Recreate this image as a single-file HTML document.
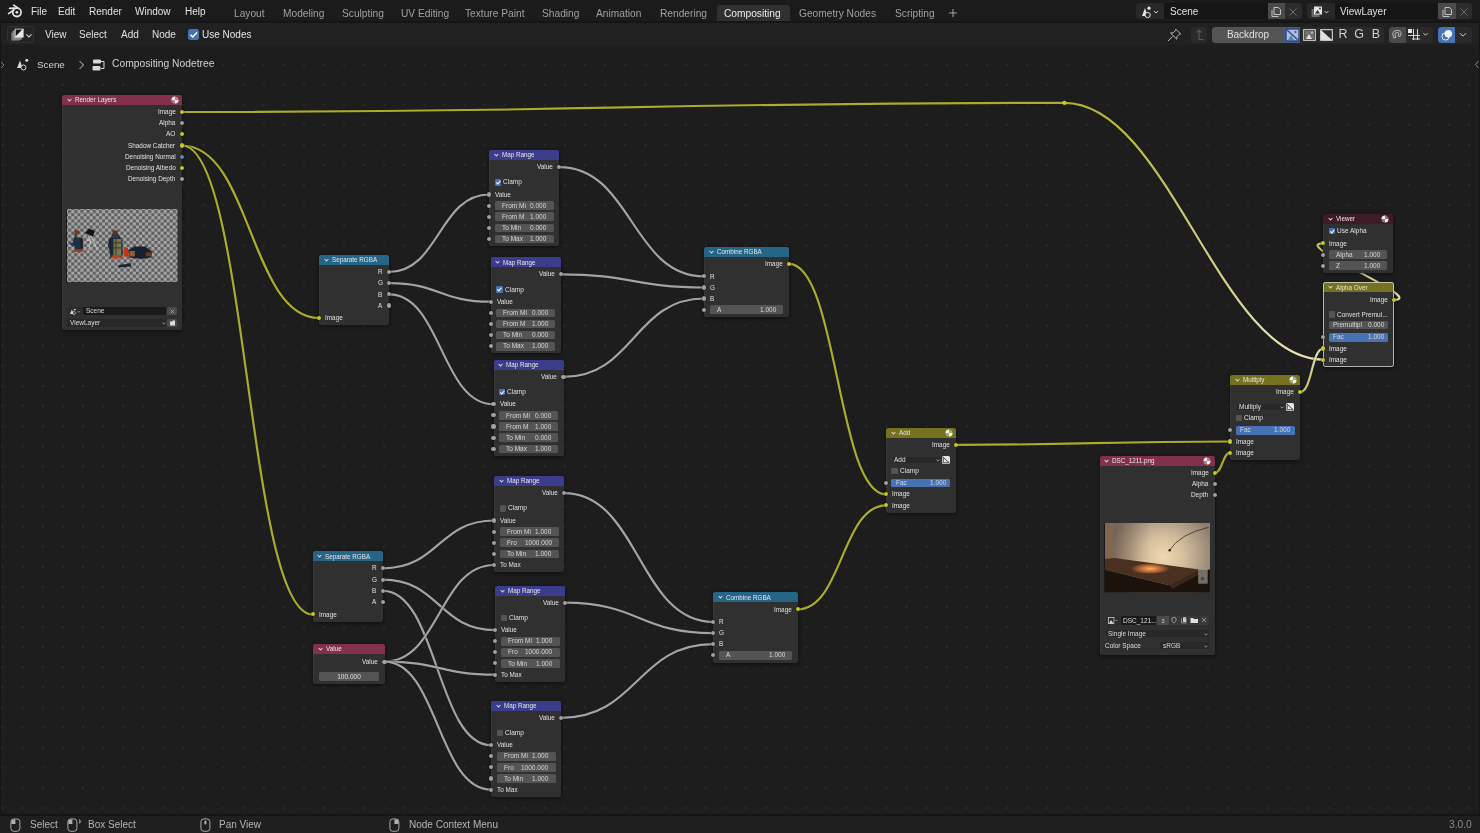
<!DOCTYPE html><html><head><meta charset="utf-8"><style>
*{margin:0;padding:0;box-sizing:border-box}
html,body{width:1480px;height:833px;overflow:hidden;background:#1d1d1d;font-family:"Liberation Sans", sans-serif}
.t{position:absolute;white-space:nowrap;line-height:1.2;will-change:transform}
.r{position:absolute}
.n{position:absolute;background:#303030;border-radius:2.5px;box-shadow:0 1px 4px rgba(0,0,0,0.55), inset 0.8px 0 0 rgba(255,255,255,0.05)}
.nh{position:absolute;border-radius:2.5px 2.5px 0 0}
.s{position:absolute;border-radius:50%;box-shadow:0 0 0 0.4px rgba(0,0,0,0.5)}
.ic{position:absolute;overflow:visible}
.links,.grid{position:absolute;left:0;top:0}
</style></head><body>
<svg class="grid" width="1480" height="833"><defs><pattern id="dots" x="2.63" y="4.35" width="20.087" height="20.087" patternUnits="userSpaceOnUse"><circle cx="0" cy="0" r="1.2" fill="#2a2a2a"/><circle cx="20.087" cy="0" r="1.2" fill="#2a2a2a"/><circle cx="0" cy="20.087" r="1.2" fill="#2a2a2a"/><circle cx="20.087" cy="20.087" r="1.2" fill="#2a2a2a"/></pattern></defs><rect x="0" y="46" width="1480" height="768" fill="url(#dots)"/></svg>
<svg class="links" width="1480" height="833" viewBox="0 0 1480 833">
<defs>
<linearGradient id="g0" gradientUnits="userSpaceOnUse" x1="1064.4" y1="102.9" x2="1323.3" y2="359.6"><stop offset="0" stop-color="#b0b02e"/><stop offset="1" stop-color="#e8e4bc"/></linearGradient>
<linearGradient id="g1" gradientUnits="userSpaceOnUse" x1="1300.3" y1="392.0" x2="1323.3" y2="348.5"><stop offset="0" stop-color="#c0bc60"/><stop offset="1" stop-color="#e8e4bc"/></linearGradient>
<linearGradient id="g2" gradientUnits="userSpaceOnUse" x1="1393.7" y1="299.8" x2="1323.3" y2="243.4"><stop offset="0" stop-color="#e0dcb0"/><stop offset="1" stop-color="#c8c460"/></linearGradient>
</defs>
<path d="M182.00 112.00 C623.20 112.00 623.20 102.90 1064.40 102.90" stroke="#151515" stroke-opacity="0.45" stroke-width="3.6" fill="none"/>
<path d="M182.00 112.00 C623.20 112.00 623.20 102.90 1064.40 102.90" stroke="#abab2e" stroke-width="2.2" fill="none"/>
<path d="M1064.40 102.90 C1167.96 102.90 1219.74 359.60 1323.30 359.60" stroke="#151515" stroke-opacity="0.45" stroke-width="3.6" fill="none"/>
<path d="M1064.40 102.90 C1167.96 102.90 1219.74 359.60 1323.30 359.60" stroke="url(#g0)" stroke-width="2.2" fill="none"/>
<path d="M182.00 145.50 C250.50 145.50 250.50 318.00 319.00 318.00" stroke="#151515" stroke-opacity="0.45" stroke-width="3.6" fill="none"/>
<path d="M182.00 145.50 C250.50 145.50 250.50 318.00 319.00 318.00" stroke="#abab2e" stroke-width="2.2" fill="none"/>
<path d="M182.00 145.50 C247.30 145.50 247.30 614.40 312.60 614.40" stroke="#151515" stroke-opacity="0.45" stroke-width="3.6" fill="none"/>
<path d="M182.00 145.50 C247.30 145.50 247.30 614.40 312.60 614.40" stroke="#abab2e" stroke-width="2.2" fill="none"/>
<path d="M389.00 272.00 C439.10 272.00 439.10 194.50 489.20 194.50" stroke="#151515" stroke-opacity="0.45" stroke-width="3.6" fill="none"/>
<path d="M389.00 272.00 C439.10 272.00 439.10 194.50 489.20 194.50" stroke="#a3a3a3" stroke-width="2.2" fill="none"/>
<path d="M389.00 283.20 C439.90 283.20 439.90 301.70 490.80 301.70" stroke="#151515" stroke-opacity="0.45" stroke-width="3.6" fill="none"/>
<path d="M389.00 283.20 C439.90 283.20 439.90 301.70 490.80 301.70" stroke="#a3a3a3" stroke-width="2.2" fill="none"/>
<path d="M389.00 294.40 C441.25 294.40 441.25 404.30 493.50 404.30" stroke="#151515" stroke-opacity="0.45" stroke-width="3.6" fill="none"/>
<path d="M389.00 294.40 C441.25 294.40 441.25 404.30 493.50 404.30" stroke="#a3a3a3" stroke-width="2.2" fill="none"/>
<path d="M559.20 167.10 C631.80 167.10 631.80 276.40 704.40 276.40" stroke="#151515" stroke-opacity="0.45" stroke-width="3.6" fill="none"/>
<path d="M559.20 167.10 C631.80 167.10 631.80 276.40 704.40 276.40" stroke="#a3a3a3" stroke-width="2.2" fill="none"/>
<path d="M560.80 274.30 C632.60 274.30 632.60 287.50 704.40 287.50" stroke="#151515" stroke-opacity="0.45" stroke-width="3.6" fill="none"/>
<path d="M560.80 274.30 C632.60 274.30 632.60 287.50 704.40 287.50" stroke="#a3a3a3" stroke-width="2.2" fill="none"/>
<path d="M563.50 376.90 C633.95 376.90 633.95 298.50 704.40 298.50" stroke="#151515" stroke-opacity="0.45" stroke-width="3.6" fill="none"/>
<path d="M563.50 376.90 C633.95 376.90 633.95 298.50 704.40 298.50" stroke="#a3a3a3" stroke-width="2.2" fill="none"/>
<path d="M788.90 263.80 C837.45 263.80 837.45 494.30 886.00 494.30" stroke="#151515" stroke-opacity="0.45" stroke-width="3.6" fill="none"/>
<path d="M788.90 263.80 C837.45 263.80 837.45 494.30 886.00 494.30" stroke="#abab2e" stroke-width="2.2" fill="none"/>
<path d="M797.70 609.40 C841.85 609.40 841.85 505.40 886.00 505.40" stroke="#151515" stroke-opacity="0.45" stroke-width="3.6" fill="none"/>
<path d="M797.70 609.40 C841.85 609.40 841.85 505.40 886.00 505.40" stroke="#abab2e" stroke-width="2.2" fill="none"/>
<path d="M956.00 444.80 C1093.15 444.80 1093.15 441.50 1230.30 441.50" stroke="#151515" stroke-opacity="0.45" stroke-width="3.6" fill="none"/>
<path d="M956.00 444.80 C1093.15 444.80 1093.15 441.50 1230.30 441.50" stroke="#abab2e" stroke-width="2.2" fill="none"/>
<path d="M1214.80 472.80 C1222.55 472.80 1222.55 452.60 1230.30 452.60" stroke="#151515" stroke-opacity="0.45" stroke-width="3.6" fill="none"/>
<path d="M1214.80 472.80 C1222.55 472.80 1222.55 452.60 1230.30 452.60" stroke="#abab2e" stroke-width="2.2" fill="none"/>
<path d="M1300.30 392.00 C1311.80 392.00 1311.80 348.50 1323.30 348.50" stroke="#151515" stroke-opacity="0.45" stroke-width="3.6" fill="none"/>
<path d="M1300.30 392.00 C1311.80 392.00 1311.80 348.50 1323.30 348.50" stroke="url(#g1)" stroke-width="2.2" fill="none"/>
<path d="M1393.70 299.80 C1428.90 299.80 1288.10 243.40 1323.30 243.40" stroke="#151515" stroke-opacity="0.45" stroke-width="3.6" fill="none"/>
<path d="M1393.70 299.80 C1428.90 299.80 1288.10 243.40 1323.30 243.40" stroke="url(#g2)" stroke-width="2.2" fill="none"/>
<path d="M383.00 568.30 C438.65 568.30 438.65 520.50 494.30 520.50" stroke="#151515" stroke-opacity="0.45" stroke-width="3.6" fill="none"/>
<path d="M383.00 568.30 C438.65 568.30 438.65 520.50 494.30 520.50" stroke="#a3a3a3" stroke-width="2.2" fill="none"/>
<path d="M383.00 579.60 C439.10 579.60 439.10 630.10 495.20 630.10" stroke="#151515" stroke-opacity="0.45" stroke-width="3.6" fill="none"/>
<path d="M383.00 579.60 C439.10 579.60 439.10 630.10 495.20 630.10" stroke="#a3a3a3" stroke-width="2.2" fill="none"/>
<path d="M383.00 590.80 C437.10 590.80 437.10 745.20 491.20 745.20" stroke="#151515" stroke-opacity="0.45" stroke-width="3.6" fill="none"/>
<path d="M383.00 590.80 C437.10 590.80 437.10 745.20 491.20 745.20" stroke="#a3a3a3" stroke-width="2.2" fill="none"/>
<path d="M384.50 661.60 C439.40 661.60 439.40 565.00 494.30 565.00" stroke="#151515" stroke-opacity="0.45" stroke-width="3.6" fill="none"/>
<path d="M384.50 661.60 C439.40 661.60 439.40 565.00 494.30 565.00" stroke="#a3a3a3" stroke-width="2.2" fill="none"/>
<path d="M384.50 661.60 C439.85 661.60 439.85 674.60 495.20 674.60" stroke="#151515" stroke-opacity="0.45" stroke-width="3.6" fill="none"/>
<path d="M384.50 661.60 C439.85 661.60 439.85 674.60 495.20 674.60" stroke="#a3a3a3" stroke-width="2.2" fill="none"/>
<path d="M384.50 661.60 C437.85 661.60 437.85 789.70 491.20 789.70" stroke="#151515" stroke-opacity="0.45" stroke-width="3.6" fill="none"/>
<path d="M384.50 661.60 C437.85 661.60 437.85 789.70 491.20 789.70" stroke="#a3a3a3" stroke-width="2.2" fill="none"/>
<path d="M564.30 493.10 C638.75 493.10 638.75 622.00 713.20 622.00" stroke="#151515" stroke-opacity="0.45" stroke-width="3.6" fill="none"/>
<path d="M564.30 493.10 C638.75 493.10 638.75 622.00 713.20 622.00" stroke="#a3a3a3" stroke-width="2.2" fill="none"/>
<path d="M565.20 602.70 C639.20 602.70 639.20 633.10 713.20 633.10" stroke="#151515" stroke-opacity="0.45" stroke-width="3.6" fill="none"/>
<path d="M565.20 602.70 C639.20 602.70 639.20 633.10 713.20 633.10" stroke="#a3a3a3" stroke-width="2.2" fill="none"/>
<path d="M561.20 717.80 C637.20 717.80 637.20 644.10 713.20 644.10" stroke="#151515" stroke-opacity="0.45" stroke-width="3.6" fill="none"/>
<path d="M561.20 717.80 C637.20 717.80 637.20 644.10 713.20 644.10" stroke="#a3a3a3" stroke-width="2.2" fill="none"/>
<circle cx="1064.4" cy="102.9" r="2.1" fill="#c8c82a"/>
</svg>
<div class="n" style="left:62.00px;top:95.00px;width:120.00px;height:235.00px;"></div>
<div class="nh" style="left:62.00px;top:95.00px;width:120.00px;height:10px;background:#83314a"></div>
<svg class="ic" style="left:66.50px;top:98.00px" width="5" height="4" viewBox="0 0 5 4"><path d="M0.6 1 L2.5 2.9 L4.4 1" stroke="#d4d4d4" stroke-width="1.05" fill="none"/></svg>
<div class="t" style="left:74.60px;top:96.32px;font-size:6.3px;color:#e6e6e6;">Render Layers</div>
<svg class="ic" style="left:170.50px;top:96.00px" width="8" height="8" viewBox="0 0 8 8"><circle cx="4" cy="4" r="3.5" fill="rgba(255,255,255,0.4)"/><path d="M4 4 L4 0.5 A3.5 3.5 0 0 0 0.5 4 Z" fill="#f0f0f0"/><path d="M4 4 L7.5 4 A3.5 3.5 0 0 1 4 7.5 Z" fill="#f0f0f0"/></svg>
<div class="t" style="right:1304.30px;top:108.16px;font-size:6.4px;color:#e0e0e0;">Image</div>
<div class="t" style="right:1304.30px;top:119.36px;font-size:6.4px;color:#e0e0e0;">Alpha</div>
<div class="t" style="right:1304.30px;top:130.46px;font-size:6.4px;color:#e0e0e0;">AO</div>
<div class="t" style="right:1304.30px;top:141.66px;font-size:6.4px;color:#e0e0e0;">Shadow Catcher</div>
<div class="t" style="right:1304.30px;top:152.76px;font-size:6.4px;color:#e0e0e0;">Denoising Normal</div>
<div class="t" style="right:1304.30px;top:163.96px;font-size:6.4px;color:#e0e0e0;">Denoising Albedo</div>
<div class="t" style="right:1304.30px;top:175.16px;font-size:6.4px;color:#e0e0e0;">Denoising Depth</div>
<div class="r" style="left:66.20px;top:208.70px;width:111.40px;height:74.00px;background:#1e1e1e;border-radius:1.5px;"></div>
<svg class="ic" style="left:66.60px;top:209.10px" width="110.60" height="73.20" viewBox="66.60 209.10 110.60 73.20"><defs><pattern id="chk" x="67.7" y="210.2" width="6.16" height="6.16" patternUnits="userSpaceOnUse"><rect width="6.16" height="6.16" fill="#a6a6a6"/><rect width="3.08" height="3.08" fill="#5f5f5f"/><rect x="3.08" y="3.08" width="3.08" height="3.08" fill="#5f5f5f"/></pattern></defs><rect x="66.60" y="209.10" width="110.60" height="73.20" fill="url(#chk)"/><g><path d="M72 243 L74 237 L78 236.5 L82 238 L82.5 249 L80 251 L75 251 L74 246 L69.5 244.5 L70 242.5 Z" fill="#1c3048"/><rect x="74" y="230.5" width="5" height="3" fill="#7a3020"/><rect x="74" y="233.5" width="4.5" height="3" fill="#3a4050"/><rect x="77" y="234.5" width="3" height="3" fill="#a8a060"/><rect x="73.5" y="249.5" width="9" height="2.5" fill="#a83a1e"/><rect x="80" y="239" width="2.5" height="9" fill="#202020"/><path d="M84.5 233 L88.5 228.5 L94.5 231 L92.5 236.5 Z" fill="#141414"/><path d="M88 236 L90 242 L88.5 250 M91 237 L95 245 L96.5 250 M86 240.5 L91 240" stroke="#d0d0d0" stroke-width="1.1" fill="none" opacity="0.75"/><path d="M107.5 246 L108.5 239 L112 236 L119 236 L122 240 L122.5 255 L119 258 L110 258 L109 250 Z" fill="#1e2636"/><rect x="112" y="230.5" width="5.5" height="4" fill="#6a3020"/><rect x="111.5" y="234" width="7" height="4" fill="#303848"/><rect x="113" y="239" width="8" height="17" fill="#9a9660" opacity="0.7"/><path d="M113 243 H121 M113 248 H121 M115.5 239 V256" stroke="#2a2a20" stroke-width="0.8"/><rect x="111" y="255.5" width="9" height="3" fill="#c0401c"/><path d="M123.5 249 L127.5 247.5 L128.6 256.5 L124 256.8 Z" fill="#d02c14"/><path d="M128 250 L134 246.5 L145 246.5 L151.5 251.5 L151 257.5 L141 259.2 L129 257.5 Z" fill="#182030"/><rect x="129" y="251" width="5.5" height="5.5" fill="#b07030" opacity="0.8"/><rect x="145.5" y="252.5" width="5.5" height="4" fill="#6a3a1c"/><path d="M118 265 L126 264 L130.8 263 L130.3 266.5 L118.5 267.5 Z" fill="#1a2436"/></g></svg>
<div class="r" style="left:67.40px;top:306.80px;width:15.40px;height:8.40px;background:#2c2c2c;border-radius:1.5px;"></div>
<svg class="ic" style="left:68.5px;top:307.5px" width="12" height="7" viewBox="0 0 12 7"><path d="M1 6 L3 1.5 L4.5 6 Z" fill="#ddd"/><circle cx="5" cy="5" r="1.5" fill="none" stroke="#ddd" stroke-width="0.6"/><circle cx="5.8" cy="1.6" r="0.9" fill="#ddd"/><path d="M8.4 3.2 L9.6 4.4 L10.8 3.2" stroke="#ccc" stroke-width="0.6" fill="none"/></svg>
<div class="r" style="left:83.00px;top:306.80px;width:83.00px;height:8.40px;background:#1a1a1a;border-radius:0px;"></div>
<div class="t" style="left:85.50px;top:307.10px;font-size:6.5px;color:#dcdcdc;">Scene</div>
<div class="r" style="left:166.80px;top:306.80px;width:10.40px;height:8.40px;background:#4a4a4a;border-radius:1.5px;"></div>
<svg class="ic" style="left:169.5px;top:308.5px" width="5" height="5" viewBox="0 0 5 5"><path d="M0.7 0.7 L4.3 4.3 M4.3 0.7 L0.7 4.3" stroke="#bbb" stroke-width="0.7"/></svg>
<div class="r" style="left:67.40px;top:318.80px;width:99.00px;height:8.50px;background:#282828;border-radius:1.5px;"></div>
<div class="t" style="left:70.00px;top:319.10px;font-size:6.5px;color:#dcdcdc;">ViewLayer</div>
<svg class="ic" style="left:161.5px;top:322px" width="4" height="3" viewBox="0 0 4 3"><path d="M0.4 0.6 L2 2.2 L3.6 0.6" stroke="#bbb" stroke-width="0.7" fill="none"/></svg>
<div class="r" style="left:166.80px;top:318.80px;width:10.40px;height:8.50px;background:#4a4a4a;border-radius:1.5px;"></div>
<svg class="ic" style="left:168.5px;top:320px" width="7" height="6" viewBox="0 0 7 6"><path d="M1 1.5 L3.5 1.5 L3.5 0.5 L6 0.5 L6 5.5 L1 5.5 Z" fill="#ddd"/></svg>
<div class="n" style="left:319.00px;top:255.00px;width:70.00px;height:70.00px;"></div>
<div class="nh" style="left:319.00px;top:255.00px;width:70.00px;height:10px;background:#246588"></div>
<svg class="ic" style="left:323.50px;top:258.00px" width="5" height="4" viewBox="0 0 5 4"><path d="M0.6 1 L2.5 2.9 L4.4 1" stroke="#d4d4d4" stroke-width="1.05" fill="none"/></svg>
<div class="t" style="left:331.60px;top:256.32px;font-size:6.3px;color:#e6e6e6;">Separate RGBA</div>
<div class="t" style="right:1097.30px;top:268.16px;font-size:6.4px;color:#e0e0e0;">R</div>
<div class="t" style="right:1097.30px;top:279.36px;font-size:6.4px;color:#e0e0e0;">G</div>
<div class="t" style="right:1097.30px;top:290.56px;font-size:6.4px;color:#e0e0e0;">B</div>
<div class="t" style="right:1097.30px;top:301.66px;font-size:6.4px;color:#e0e0e0;">A</div>
<div class="t" style="left:325.00px;top:314.16px;font-size:6.4px;color:#e0e0e0;">Image</div>
<div class="n" style="left:489.20px;top:150.00px;width:70.00px;height:96.00px;"></div>
<div class="nh" style="left:489.20px;top:150.00px;width:70.00px;height:10px;background:#3c3c8c"></div>
<svg class="ic" style="left:493.70px;top:153.00px" width="5" height="4" viewBox="0 0 5 4"><path d="M0.6 1 L2.5 2.9 L4.4 1" stroke="#d4d4d4" stroke-width="1.05" fill="none"/></svg>
<div class="t" style="left:501.80px;top:151.32px;font-size:6.3px;color:#e6e6e6;">Map Range</div>
<div class="t" style="right:927.10px;top:163.26px;font-size:6.4px;color:#e0e0e0;">Value</div>
<div class="r" style="left:494.50px;top:179.00px;width:6.60px;height:6.60px;background:#4772b3;border-radius:1.2px;"></div>
<svg class="ic" style="left:494.50px;top:179.00px" width="6.6" height="6.6" viewBox="0 0 10 10"><path d="M2 5.2 L4.2 7.4 L8.2 2.6" stroke="#fff" stroke-width="1.6" fill="none"/></svg>
<div class="t" style="left:503.10px;top:178.40px;font-size:6.5px;color:#e0e0e0;">Clamp</div>
<div class="t" style="left:495.20px;top:190.66px;font-size:6.4px;color:#e0e0e0;">Value</div>
<div class="r" style="left:494.80px;top:201.30px;width:58.80px;height:8.80px;background:#545454;border-radius:1.5px;"></div>
<div class="t" style="left:501.80px;top:201.70px;font-size:6.5px;color:#d8d8d8;">From Mi</div>
<div class="t" style="right:933.40px;top:201.70px;font-size:6.5px;color:#d8d8d8;">0.000</div>
<div class="r" style="left:494.80px;top:212.40px;width:58.80px;height:8.80px;background:#545454;border-radius:1.5px;"></div>
<div class="t" style="left:501.80px;top:212.80px;font-size:6.5px;color:#d8d8d8;">From M</div>
<div class="t" style="right:933.40px;top:212.80px;font-size:6.5px;color:#d8d8d8;">1.000</div>
<div class="r" style="left:494.80px;top:223.50px;width:58.80px;height:8.80px;background:#545454;border-radius:1.5px;"></div>
<div class="t" style="left:501.80px;top:223.90px;font-size:6.5px;color:#d8d8d8;">To Min</div>
<div class="t" style="right:933.40px;top:223.90px;font-size:6.5px;color:#d8d8d8;">0.000</div>
<div class="r" style="left:494.80px;top:234.70px;width:58.80px;height:8.80px;background:#545454;border-radius:1.5px;"></div>
<div class="t" style="left:501.80px;top:235.10px;font-size:6.5px;color:#d8d8d8;">To Max</div>
<div class="t" style="right:933.40px;top:235.10px;font-size:6.5px;color:#d8d8d8;">1.000</div>
<div class="n" style="left:490.80px;top:257.20px;width:70.00px;height:96.00px;"></div>
<div class="nh" style="left:490.80px;top:257.20px;width:70.00px;height:10px;background:#3c3c8c"></div>
<svg class="ic" style="left:495.30px;top:260.20px" width="5" height="4" viewBox="0 0 5 4"><path d="M0.6 1 L2.5 2.9 L4.4 1" stroke="#d4d4d4" stroke-width="1.05" fill="none"/></svg>
<div class="t" style="left:503.40px;top:258.52px;font-size:6.3px;color:#e6e6e6;">Map Range</div>
<div class="t" style="right:925.50px;top:270.46px;font-size:6.4px;color:#e0e0e0;">Value</div>
<div class="r" style="left:496.10px;top:286.20px;width:6.60px;height:6.60px;background:#4772b3;border-radius:1.2px;"></div>
<svg class="ic" style="left:496.10px;top:286.20px" width="6.6" height="6.6" viewBox="0 0 10 10"><path d="M2 5.2 L4.2 7.4 L8.2 2.6" stroke="#fff" stroke-width="1.6" fill="none"/></svg>
<div class="t" style="left:504.70px;top:285.60px;font-size:6.5px;color:#e0e0e0;">Clamp</div>
<div class="t" style="left:496.80px;top:297.86px;font-size:6.4px;color:#e0e0e0;">Value</div>
<div class="r" style="left:496.40px;top:308.50px;width:58.80px;height:8.80px;background:#545454;border-radius:1.5px;"></div>
<div class="t" style="left:503.40px;top:308.90px;font-size:6.5px;color:#d8d8d8;">From Mi</div>
<div class="t" style="right:931.80px;top:308.90px;font-size:6.5px;color:#d8d8d8;">0.000</div>
<div class="r" style="left:496.40px;top:319.60px;width:58.80px;height:8.80px;background:#545454;border-radius:1.5px;"></div>
<div class="t" style="left:503.40px;top:320.00px;font-size:6.5px;color:#d8d8d8;">From M</div>
<div class="t" style="right:931.80px;top:320.00px;font-size:6.5px;color:#d8d8d8;">1.000</div>
<div class="r" style="left:496.40px;top:330.70px;width:58.80px;height:8.80px;background:#545454;border-radius:1.5px;"></div>
<div class="t" style="left:503.40px;top:331.10px;font-size:6.5px;color:#d8d8d8;">To Min</div>
<div class="t" style="right:931.80px;top:331.10px;font-size:6.5px;color:#d8d8d8;">0.000</div>
<div class="r" style="left:496.40px;top:341.90px;width:58.80px;height:8.80px;background:#545454;border-radius:1.5px;"></div>
<div class="t" style="left:503.40px;top:342.30px;font-size:6.5px;color:#d8d8d8;">To Max</div>
<div class="t" style="right:931.80px;top:342.30px;font-size:6.5px;color:#d8d8d8;">1.000</div>
<div class="n" style="left:493.50px;top:359.80px;width:70.00px;height:96.00px;"></div>
<div class="nh" style="left:493.50px;top:359.80px;width:70.00px;height:10px;background:#3c3c8c"></div>
<svg class="ic" style="left:498.00px;top:362.80px" width="5" height="4" viewBox="0 0 5 4"><path d="M0.6 1 L2.5 2.9 L4.4 1" stroke="#d4d4d4" stroke-width="1.05" fill="none"/></svg>
<div class="t" style="left:506.10px;top:361.12px;font-size:6.3px;color:#e6e6e6;">Map Range</div>
<div class="t" style="right:922.80px;top:373.06px;font-size:6.4px;color:#e0e0e0;">Value</div>
<div class="r" style="left:498.80px;top:388.80px;width:6.60px;height:6.60px;background:#4772b3;border-radius:1.2px;"></div>
<svg class="ic" style="left:498.80px;top:388.80px" width="6.6" height="6.6" viewBox="0 0 10 10"><path d="M2 5.2 L4.2 7.4 L8.2 2.6" stroke="#fff" stroke-width="1.6" fill="none"/></svg>
<div class="t" style="left:507.40px;top:388.20px;font-size:6.5px;color:#e0e0e0;">Clamp</div>
<div class="t" style="left:499.50px;top:400.46px;font-size:6.4px;color:#e0e0e0;">Value</div>
<div class="r" style="left:499.10px;top:411.10px;width:58.80px;height:8.80px;background:#545454;border-radius:1.5px;"></div>
<div class="t" style="left:506.10px;top:411.50px;font-size:6.5px;color:#d8d8d8;">From Mi</div>
<div class="t" style="right:929.10px;top:411.50px;font-size:6.5px;color:#d8d8d8;">0.000</div>
<div class="r" style="left:499.10px;top:422.20px;width:58.80px;height:8.80px;background:#545454;border-radius:1.5px;"></div>
<div class="t" style="left:506.10px;top:422.60px;font-size:6.5px;color:#d8d8d8;">From M</div>
<div class="t" style="right:929.10px;top:422.60px;font-size:6.5px;color:#d8d8d8;">1.000</div>
<div class="r" style="left:499.10px;top:433.30px;width:58.80px;height:8.80px;background:#545454;border-radius:1.5px;"></div>
<div class="t" style="left:506.10px;top:433.70px;font-size:6.5px;color:#d8d8d8;">To Min</div>
<div class="t" style="right:929.10px;top:433.70px;font-size:6.5px;color:#d8d8d8;">0.000</div>
<div class="r" style="left:499.10px;top:444.50px;width:58.80px;height:8.80px;background:#545454;border-radius:1.5px;"></div>
<div class="t" style="left:506.10px;top:444.90px;font-size:6.5px;color:#d8d8d8;">To Max</div>
<div class="t" style="right:929.10px;top:444.90px;font-size:6.5px;color:#d8d8d8;">1.000</div>
<div class="n" style="left:494.30px;top:476.00px;width:70.00px;height:96.00px;"></div>
<div class="nh" style="left:494.30px;top:476.00px;width:70.00px;height:10px;background:#3c3c8c"></div>
<svg class="ic" style="left:498.80px;top:479.00px" width="5" height="4" viewBox="0 0 5 4"><path d="M0.6 1 L2.5 2.9 L4.4 1" stroke="#d4d4d4" stroke-width="1.05" fill="none"/></svg>
<div class="t" style="left:506.90px;top:477.32px;font-size:6.3px;color:#e6e6e6;">Map Range</div>
<div class="t" style="right:922.00px;top:489.26px;font-size:6.4px;color:#e0e0e0;">Value</div>
<div class="r" style="left:499.60px;top:505.00px;width:6.60px;height:6.60px;background:#545454;border-radius:1.2px;"></div>
<div class="t" style="left:508.20px;top:504.40px;font-size:6.5px;color:#e0e0e0;">Clamp</div>
<div class="t" style="left:500.30px;top:516.66px;font-size:6.4px;color:#e0e0e0;">Value</div>
<div class="r" style="left:499.90px;top:527.30px;width:58.80px;height:8.80px;background:#545454;border-radius:1.5px;"></div>
<div class="t" style="left:506.90px;top:527.70px;font-size:6.5px;color:#d8d8d8;">From Mi</div>
<div class="t" style="right:928.30px;top:527.70px;font-size:6.5px;color:#d8d8d8;">1.000</div>
<div class="r" style="left:499.90px;top:538.40px;width:58.80px;height:8.80px;background:#545454;border-radius:1.5px;"></div>
<div class="t" style="left:506.90px;top:538.80px;font-size:6.5px;color:#d8d8d8;">Fro</div>
<div class="t" style="right:928.30px;top:538.80px;font-size:6.5px;color:#d8d8d8;">1000.000</div>
<div class="r" style="left:499.90px;top:549.50px;width:58.80px;height:8.80px;background:#545454;border-radius:1.5px;"></div>
<div class="t" style="left:506.90px;top:549.90px;font-size:6.5px;color:#d8d8d8;">To Min</div>
<div class="t" style="right:928.30px;top:549.90px;font-size:6.5px;color:#d8d8d8;">1.000</div>
<div class="t" style="left:500.30px;top:561.16px;font-size:6.4px;color:#e0e0e0;">To Max</div>
<div class="n" style="left:495.20px;top:585.60px;width:70.00px;height:96.00px;"></div>
<div class="nh" style="left:495.20px;top:585.60px;width:70.00px;height:10px;background:#3c3c8c"></div>
<svg class="ic" style="left:499.70px;top:588.60px" width="5" height="4" viewBox="0 0 5 4"><path d="M0.6 1 L2.5 2.9 L4.4 1" stroke="#d4d4d4" stroke-width="1.05" fill="none"/></svg>
<div class="t" style="left:507.80px;top:586.92px;font-size:6.3px;color:#e6e6e6;">Map Range</div>
<div class="t" style="right:921.10px;top:598.86px;font-size:6.4px;color:#e0e0e0;">Value</div>
<div class="r" style="left:500.50px;top:614.60px;width:6.60px;height:6.60px;background:#545454;border-radius:1.2px;"></div>
<div class="t" style="left:509.10px;top:614.00px;font-size:6.5px;color:#e0e0e0;">Clamp</div>
<div class="t" style="left:501.20px;top:626.26px;font-size:6.4px;color:#e0e0e0;">Value</div>
<div class="r" style="left:500.80px;top:636.90px;width:58.80px;height:8.80px;background:#545454;border-radius:1.5px;"></div>
<div class="t" style="left:507.80px;top:637.30px;font-size:6.5px;color:#d8d8d8;">From Mi</div>
<div class="t" style="right:927.40px;top:637.30px;font-size:6.5px;color:#d8d8d8;">1.000</div>
<div class="r" style="left:500.80px;top:648.00px;width:58.80px;height:8.80px;background:#545454;border-radius:1.5px;"></div>
<div class="t" style="left:507.80px;top:648.40px;font-size:6.5px;color:#d8d8d8;">Fro</div>
<div class="t" style="right:927.40px;top:648.40px;font-size:6.5px;color:#d8d8d8;">1000.000</div>
<div class="r" style="left:500.80px;top:659.10px;width:58.80px;height:8.80px;background:#545454;border-radius:1.5px;"></div>
<div class="t" style="left:507.80px;top:659.50px;font-size:6.5px;color:#d8d8d8;">To Min</div>
<div class="t" style="right:927.40px;top:659.50px;font-size:6.5px;color:#d8d8d8;">1.000</div>
<div class="t" style="left:501.20px;top:670.76px;font-size:6.4px;color:#e0e0e0;">To Max</div>
<div class="n" style="left:491.20px;top:700.70px;width:70.00px;height:96.00px;"></div>
<div class="nh" style="left:491.20px;top:700.70px;width:70.00px;height:10px;background:#3c3c8c"></div>
<svg class="ic" style="left:495.70px;top:703.70px" width="5" height="4" viewBox="0 0 5 4"><path d="M0.6 1 L2.5 2.9 L4.4 1" stroke="#d4d4d4" stroke-width="1.05" fill="none"/></svg>
<div class="t" style="left:503.80px;top:702.02px;font-size:6.3px;color:#e6e6e6;">Map Range</div>
<div class="t" style="right:925.10px;top:713.96px;font-size:6.4px;color:#e0e0e0;">Value</div>
<div class="r" style="left:496.50px;top:729.70px;width:6.60px;height:6.60px;background:#545454;border-radius:1.2px;"></div>
<div class="t" style="left:505.10px;top:729.10px;font-size:6.5px;color:#e0e0e0;">Clamp</div>
<div class="t" style="left:497.20px;top:741.36px;font-size:6.4px;color:#e0e0e0;">Value</div>
<div class="r" style="left:496.80px;top:752.00px;width:58.80px;height:8.80px;background:#545454;border-radius:1.5px;"></div>
<div class="t" style="left:503.80px;top:752.40px;font-size:6.5px;color:#d8d8d8;">From Mi</div>
<div class="t" style="right:931.40px;top:752.40px;font-size:6.5px;color:#d8d8d8;">1.000</div>
<div class="r" style="left:496.80px;top:763.10px;width:58.80px;height:8.80px;background:#545454;border-radius:1.5px;"></div>
<div class="t" style="left:503.80px;top:763.50px;font-size:6.5px;color:#d8d8d8;">Fro</div>
<div class="t" style="right:931.40px;top:763.50px;font-size:6.5px;color:#d8d8d8;">1000.000</div>
<div class="r" style="left:496.80px;top:774.20px;width:58.80px;height:8.80px;background:#545454;border-radius:1.5px;"></div>
<div class="t" style="left:503.80px;top:774.60px;font-size:6.5px;color:#d8d8d8;">To Min</div>
<div class="t" style="right:931.40px;top:774.60px;font-size:6.5px;color:#d8d8d8;">1.000</div>
<div class="t" style="left:497.20px;top:785.86px;font-size:6.4px;color:#e0e0e0;">To Max</div>
<div class="n" style="left:704.40px;top:246.60px;width:84.50px;height:70.40px;"></div>
<div class="nh" style="left:704.40px;top:246.60px;width:84.50px;height:10px;background:#246588"></div>
<svg class="ic" style="left:708.90px;top:249.60px" width="5" height="4" viewBox="0 0 5 4"><path d="M0.6 1 L2.5 2.9 L4.4 1" stroke="#d4d4d4" stroke-width="1.05" fill="none"/></svg>
<div class="t" style="left:717.00px;top:247.92px;font-size:6.3px;color:#e6e6e6;">Combine RGBA</div>
<div class="t" style="right:697.40px;top:259.96px;font-size:6.4px;color:#e0e0e0;">Image</div>
<div class="t" style="left:710.40px;top:272.56px;font-size:6.4px;color:#e0e0e0;">R</div>
<div class="t" style="left:710.40px;top:283.66px;font-size:6.4px;color:#e0e0e0;">G</div>
<div class="t" style="left:710.40px;top:294.66px;font-size:6.4px;color:#e0e0e0;">B</div>
<div class="r" style="left:710.00px;top:305.40px;width:73.30px;height:8.80px;background:#545454;border-radius:1.5px;"></div>
<div class="t" style="left:717.00px;top:305.80px;font-size:6.5px;color:#d8d8d8;">A</div>
<div class="t" style="right:703.70px;top:305.80px;font-size:6.5px;color:#d8d8d8;">1.000</div>
<div class="n" style="left:713.20px;top:592.20px;width:84.50px;height:70.40px;"></div>
<div class="nh" style="left:713.20px;top:592.20px;width:84.50px;height:10px;background:#246588"></div>
<svg class="ic" style="left:717.70px;top:595.20px" width="5" height="4" viewBox="0 0 5 4"><path d="M0.6 1 L2.5 2.9 L4.4 1" stroke="#d4d4d4" stroke-width="1.05" fill="none"/></svg>
<div class="t" style="left:725.80px;top:593.52px;font-size:6.3px;color:#e6e6e6;">Combine RGBA</div>
<div class="t" style="right:688.60px;top:605.56px;font-size:6.4px;color:#e0e0e0;">Image</div>
<div class="t" style="left:719.20px;top:618.16px;font-size:6.4px;color:#e0e0e0;">R</div>
<div class="t" style="left:719.20px;top:629.26px;font-size:6.4px;color:#e0e0e0;">G</div>
<div class="t" style="left:719.20px;top:640.26px;font-size:6.4px;color:#e0e0e0;">B</div>
<div class="r" style="left:718.80px;top:651.00px;width:73.30px;height:8.80px;background:#545454;border-radius:1.5px;"></div>
<div class="t" style="left:725.80px;top:651.40px;font-size:6.5px;color:#d8d8d8;">A</div>
<div class="t" style="right:694.90px;top:651.40px;font-size:6.5px;color:#d8d8d8;">1.000</div>
<div class="n" style="left:886.00px;top:427.50px;width:70.00px;height:85.00px;"></div>
<div class="nh" style="left:886.00px;top:427.50px;width:70.00px;height:10px;background:#74721f"></div>
<svg class="ic" style="left:890.50px;top:430.50px" width="5" height="4" viewBox="0 0 5 4"><path d="M0.6 1 L2.5 2.9 L4.4 1" stroke="#d4d4d4" stroke-width="1.05" fill="none"/></svg>
<div class="t" style="left:898.60px;top:428.82px;font-size:6.3px;color:#e6e6e6;">Add</div>
<svg class="ic" style="left:944.50px;top:428.50px" width="8" height="8" viewBox="0 0 8 8"><circle cx="4" cy="4" r="3.5" fill="rgba(255,255,255,0.4)"/><path d="M4 4 L4 0.5 A3.5 3.5 0 0 0 0.5 4 Z" fill="#f0f0f0"/><path d="M4 4 L7.5 4 A3.5 3.5 0 0 1 4 7.5 Z" fill="#f0f0f0"/></svg>
<div class="t" style="right:530.30px;top:440.96px;font-size:6.4px;color:#e0e0e0;">Image</div>
<div class="r" style="left:891.80px;top:455.90px;width:49.00px;height:8.00px;background:#282828;border-radius:1.5px;box-shadow:inset 0 0 0 0.5px #3a3a3a;"></div>
<div class="t" style="left:894.20px;top:456.00px;font-size:6.5px;color:#e0e0e0;">Add</div>
<svg class="ic" style="left:936.00px;top:458.50px" width="4" height="3" viewBox="0 0 4 3"><path d="M0.4 0.6 L2 2.2 L3.6 0.6" stroke="#cfcfcf" stroke-width="0.7" fill="none"/></svg>
<div class="r" style="left:941.80px;top:455.90px;width:8.40px;height:8.00px;background:#e6e6e6;border-radius:1.5px;"></div>
<svg class="ic" style="left:941.80px;top:455.90px" width="8.4" height="8" viewBox="0 0 8.4 8"><path d="M1.2 1.2 L7.2 6.8 M1.2 1.2 L1.2 6.8 L7.2 6.8" stroke="#333" stroke-width="0.9" fill="none"/></svg>
<div class="r" style="left:891.30px;top:467.50px;width:6.60px;height:6.60px;background:#545454;border-radius:1.2px;"></div>
<div class="t" style="left:899.90px;top:466.90px;font-size:6.5px;color:#e0e0e0;">Clamp</div>
<div class="r" style="left:891.20px;top:478.70px;width:59.20px;height:8.80px;background:#4772b3;border-radius:1.5px;"></div>
<div class="t" style="left:895.50px;top:479.10px;font-size:6.5px;color:#d8d8d8;">Fac</div>
<div class="t" style="right:533.90px;top:479.10px;font-size:6.5px;color:#d8d8d8;">1.000</div>
<div class="t" style="left:892.00px;top:490.46px;font-size:6.4px;color:#e0e0e0;">Image</div>
<div class="t" style="left:892.00px;top:501.56px;font-size:6.4px;color:#e0e0e0;">Image</div>
<div class="n" style="left:1230.30px;top:374.70px;width:70.00px;height:85.00px;"></div>
<div class="nh" style="left:1230.30px;top:374.70px;width:70.00px;height:10px;background:#74721f"></div>
<svg class="ic" style="left:1234.80px;top:377.70px" width="5" height="4" viewBox="0 0 5 4"><path d="M0.6 1 L2.5 2.9 L4.4 1" stroke="#d4d4d4" stroke-width="1.05" fill="none"/></svg>
<div class="t" style="left:1242.90px;top:376.02px;font-size:6.3px;color:#e6e6e6;">Multiply</div>
<svg class="ic" style="left:1288.80px;top:375.70px" width="8" height="8" viewBox="0 0 8 8"><circle cx="4" cy="4" r="3.5" fill="rgba(255,255,255,0.4)"/><path d="M4 4 L4 0.5 A3.5 3.5 0 0 0 0.5 4 Z" fill="#f0f0f0"/><path d="M4 4 L7.5 4 A3.5 3.5 0 0 1 4 7.5 Z" fill="#f0f0f0"/></svg>
<div class="t" style="right:186.00px;top:388.16px;font-size:6.4px;color:#e0e0e0;">Image</div>
<div class="r" style="left:1236.10px;top:403.10px;width:49.00px;height:8.00px;background:#282828;border-radius:1.5px;box-shadow:inset 0 0 0 0.5px #3a3a3a;"></div>
<div class="t" style="left:1238.50px;top:403.20px;font-size:6.5px;color:#e0e0e0;">Multiply</div>
<svg class="ic" style="left:1280.30px;top:405.70px" width="4" height="3" viewBox="0 0 4 3"><path d="M0.4 0.6 L2 2.2 L3.6 0.6" stroke="#cfcfcf" stroke-width="0.7" fill="none"/></svg>
<div class="r" style="left:1286.10px;top:403.10px;width:8.40px;height:8.00px;background:#e6e6e6;border-radius:1.5px;"></div>
<svg class="ic" style="left:1286.10px;top:403.10px" width="8.4" height="8" viewBox="0 0 8.4 8"><path d="M1.2 1.2 L7.2 6.8 M1.2 1.2 L1.2 6.8 L7.2 6.8" stroke="#333" stroke-width="0.9" fill="none"/></svg>
<div class="r" style="left:1235.60px;top:414.70px;width:6.60px;height:6.60px;background:#545454;border-radius:1.2px;"></div>
<div class="t" style="left:1244.20px;top:414.10px;font-size:6.5px;color:#e0e0e0;">Clamp</div>
<div class="r" style="left:1235.50px;top:425.90px;width:59.20px;height:8.80px;background:#4772b3;border-radius:1.5px;"></div>
<div class="t" style="left:1239.80px;top:426.30px;font-size:6.5px;color:#d8d8d8;">Fac</div>
<div class="t" style="right:189.60px;top:426.30px;font-size:6.5px;color:#d8d8d8;">1.000</div>
<div class="t" style="left:1236.30px;top:437.66px;font-size:6.4px;color:#e0e0e0;">Image</div>
<div class="t" style="left:1236.30px;top:448.76px;font-size:6.4px;color:#e0e0e0;">Image</div>
<div class="n" style="left:1323.30px;top:282.20px;width:70.40px;height:85.20px;"></div>
<div class="nh" style="left:1323.30px;top:282.20px;width:70.40px;height:10px;background:#74721f"></div>
<svg class="ic" style="left:1327.80px;top:285.20px" width="5" height="4" viewBox="0 0 5 4"><path d="M0.6 1 L2.5 2.9 L4.4 1" stroke="#d4d4d4" stroke-width="1.05" fill="none"/></svg>
<div class="t" style="left:1335.90px;top:283.52px;font-size:6.3px;color:#e6e6e6;">Alpha Over</div>
<div class="t" style="right:92.60px;top:295.96px;font-size:6.4px;color:#e0e0e0;">Image</div>
<div class="r" style="left:1328.60px;top:311.30px;width:6.60px;height:6.60px;background:#545454;border-radius:1.2px;"></div>
<div class="t" style="left:1337.20px;top:310.70px;font-size:6.5px;color:#e0e0e0;">Convert Premul...</div>
<div class="r" style="left:1328.90px;top:320.50px;width:59.20px;height:8.80px;background:#545454;border-radius:1.5px;"></div>
<div class="t" style="left:1333.20px;top:320.90px;font-size:6.5px;color:#d8d8d8;">Premultipl</div>
<div class="t" style="right:96.20px;top:320.90px;font-size:6.5px;color:#d8d8d8;">0.000</div>
<div class="r" style="left:1328.90px;top:332.90px;width:59.20px;height:8.80px;background:#4772b3;border-radius:1.5px;"></div>
<div class="t" style="left:1333.20px;top:333.30px;font-size:6.5px;color:#d8d8d8;">Fac</div>
<div class="t" style="right:96.20px;top:333.30px;font-size:6.5px;color:#d8d8d8;">1.000</div>
<div class="t" style="left:1329.30px;top:344.66px;font-size:6.4px;color:#e0e0e0;">Image</div>
<div class="t" style="left:1329.30px;top:355.76px;font-size:6.4px;color:#e0e0e0;">Image</div>
<div class="r" style="left:1323.30px;top:282.20px;width:70.40px;height:85.20px;border:1px solid rgba(225,225,215,0.75);border-radius:2.5px"></div>
<div class="n" style="left:1323.30px;top:214.10px;width:69.50px;height:58.60px;"></div>
<div class="nh" style="left:1323.30px;top:214.10px;width:69.50px;height:10px;background:#3f1b26"></div>
<svg class="ic" style="left:1327.80px;top:217.10px" width="5" height="4" viewBox="0 0 5 4"><path d="M0.6 1 L2.5 2.9 L4.4 1" stroke="#d4d4d4" stroke-width="1.05" fill="none"/></svg>
<div class="t" style="left:1335.90px;top:215.42px;font-size:6.3px;color:#e6e6e6;">Viewer</div>
<svg class="ic" style="left:1381.30px;top:215.10px" width="8" height="8" viewBox="0 0 8 8"><circle cx="4" cy="4" r="3.5" fill="rgba(255,255,255,0.4)"/><path d="M4 4 L4 0.5 A3.5 3.5 0 0 0 0.5 4 Z" fill="#f0f0f0"/><path d="M4 4 L7.5 4 A3.5 3.5 0 0 1 4 7.5 Z" fill="#f0f0f0"/></svg>
<div class="r" style="left:1328.60px;top:227.70px;width:6.60px;height:6.60px;background:#4772b3;border-radius:1.2px;"></div>
<svg class="ic" style="left:1328.60px;top:227.70px" width="6.6" height="6.6" viewBox="0 0 10 10"><path d="M2 5.2 L4.2 7.4 L8.2 2.6" stroke="#fff" stroke-width="1.6" fill="none"/></svg>
<div class="t" style="left:1337.20px;top:227.10px;font-size:6.5px;color:#e0e0e0;">Use Alpha</div>
<div class="t" style="left:1329.30px;top:239.56px;font-size:6.4px;color:#e0e0e0;">Image</div>
<div class="r" style="left:1328.90px;top:250.40px;width:58.30px;height:8.80px;background:#545454;border-radius:1.5px;"></div>
<div class="t" style="left:1335.90px;top:250.80px;font-size:6.5px;color:#d8d8d8;">Alpha</div>
<div class="t" style="right:99.80px;top:250.80px;font-size:6.5px;color:#d8d8d8;">1.000</div>
<div class="r" style="left:1328.90px;top:261.40px;width:58.30px;height:8.80px;background:#545454;border-radius:1.5px;"></div>
<div class="t" style="left:1335.90px;top:261.80px;font-size:6.5px;color:#d8d8d8;">Z</div>
<div class="t" style="right:99.80px;top:261.80px;font-size:6.5px;color:#d8d8d8;">1.000</div>
<div class="n" style="left:312.60px;top:551.20px;width:70.40px;height:70.80px;"></div>
<div class="nh" style="left:312.60px;top:551.20px;width:70.40px;height:10px;background:#246588"></div>
<svg class="ic" style="left:317.10px;top:554.20px" width="5" height="4" viewBox="0 0 5 4"><path d="M0.6 1 L2.5 2.9 L4.4 1" stroke="#d4d4d4" stroke-width="1.05" fill="none"/></svg>
<div class="t" style="left:325.20px;top:552.52px;font-size:6.3px;color:#e6e6e6;">Separate RGBA</div>
<div class="t" style="right:1103.30px;top:564.46px;font-size:6.4px;color:#e0e0e0;">R</div>
<div class="t" style="right:1103.30px;top:575.76px;font-size:6.4px;color:#e0e0e0;">G</div>
<div class="t" style="right:1103.30px;top:586.96px;font-size:6.4px;color:#e0e0e0;">B</div>
<div class="t" style="right:1103.30px;top:597.96px;font-size:6.4px;color:#e0e0e0;">A</div>
<div class="t" style="left:318.60px;top:610.56px;font-size:6.4px;color:#e0e0e0;">Image</div>
<div class="n" style="left:313.00px;top:644.00px;width:71.50px;height:39.60px;"></div>
<div class="nh" style="left:313.00px;top:644.00px;width:71.50px;height:10px;background:#83314a"></div>
<svg class="ic" style="left:317.50px;top:647.00px" width="5" height="4" viewBox="0 0 5 4"><path d="M0.6 1 L2.5 2.9 L4.4 1" stroke="#d4d4d4" stroke-width="1.05" fill="none"/></svg>
<div class="t" style="left:325.60px;top:645.32px;font-size:6.3px;color:#e6e6e6;">Value</div>
<div class="t" style="right:1101.80px;top:657.76px;font-size:6.4px;color:#e0e0e0;">Value</div>
<div class="r" style="left:318.60px;top:672.20px;width:60.30px;height:8.80px;background:#545454;border-radius:1.5px;"></div>
<div class="t" style="left:248.75px;width:200px;text-align:center;top:672.60px;font-size:6.5px;color:#e0e0e0;">100.000</div>
<div class="n" style="left:1099.80px;top:455.80px;width:115.00px;height:199.00px;"></div>
<div class="nh" style="left:1099.80px;top:455.80px;width:115.00px;height:10px;background:#83314a"></div>
<svg class="ic" style="left:1104.30px;top:458.80px" width="5" height="4" viewBox="0 0 5 4"><path d="M0.6 1 L2.5 2.9 L4.4 1" stroke="#d4d4d4" stroke-width="1.05" fill="none"/></svg>
<div class="t" style="left:1112.40px;top:457.12px;font-size:6.3px;color:#e6e6e6;">DSC_1211.png</div>
<svg class="ic" style="left:1203.30px;top:456.80px" width="8" height="8" viewBox="0 0 8 8"><circle cx="4" cy="4" r="3.5" fill="rgba(255,255,255,0.4)"/><path d="M4 4 L4 0.5 A3.5 3.5 0 0 0 0.5 4 Z" fill="#f0f0f0"/><path d="M4 4 L7.5 4 A3.5 3.5 0 0 1 4 7.5 Z" fill="#f0f0f0"/></svg>
<div class="t" style="right:271.50px;top:468.96px;font-size:6.4px;color:#e0e0e0;">Image</div>
<div class="t" style="right:271.50px;top:480.16px;font-size:6.4px;color:#e0e0e0;">Alpha</div>
<div class="t" style="right:271.50px;top:491.36px;font-size:6.4px;color:#e0e0e0;">Depth</div>
<div class="r" style="left:1104.40px;top:522.90px;width:105.80px;height:70.20px;background:#1a1a1a;border-radius:1px;"></div>
<svg class="ic" style="left:1104.8px;top:523.3px" width="105" height="69.4" viewBox="1104.8 523.3 105 69.4"><defs><radialGradient id="wl" gradientUnits="userSpaceOnUse" cx="1163" cy="557" r="52"><stop offset="0" stop-color="#f0d8ae"/><stop offset="0.4" stop-color="#d4bf9e"/><stop offset="1" stop-color="#8e7e70"/></radialGradient><radialGradient id="gl" gradientUnits="userSpaceOnUse" cx="1150" cy="569" r="20" gradientTransform="translate(1150 569) scale(1 0.3) translate(-1150 -569)"><stop offset="0" stop-color="#f8b468"/><stop offset="0.5" stop-color="#b86a34"/><stop offset="1" stop-color="#4a3020"/></radialGradient><linearGradient id="wd" gradientUnits="userSpaceOnUse" x1="1104.8" y1="0" x2="1150" y2="0"><stop offset="0" stop-color="#3c2814" stop-opacity="0.35"/><stop offset="1" stop-color="#3c2814" stop-opacity="0"/></linearGradient></defs><rect x="1104.8" y="523.3" width="105" height="69.4" fill="url(#wl)"/><rect x="1104.8" y="523.3" width="105" height="37" fill="url(#wd)"/><rect x="1104.8" y="523.3" width="8" height="37" fill="#8a6a4c" opacity="0.6"/><path d="M1104.8 559.3 L1114.4 558.3 L1199 569.9 L1169.2 585.5 L1104.8 570 Z" fill="#4a3020"/><ellipse cx="1150" cy="569" rx="19" ry="5" fill="url(#gl)"/><path d="M1104.8 570 L1169.2 585.5 L1199 569.9 L1209.8 570 L1209.8 592.7 L1104.8 592.7 Z" fill="#1c120c"/><path d="M1169.2 585.5 L1199 569.9 L1199 575 L1172 589 Z" fill="#3a281c"/><rect x="1198" y="569" width="9.5" height="15" fill="#b0aca4" opacity="0.6"/><circle cx="1202.5" cy="579" r="1.6" fill="#444"/><path d="M1169.2 550.7 Q1180 534 1208.5 527.6" stroke="#3a3028" stroke-width="0.8" fill="none"/><circle cx="1169.5" cy="550.5" r="1.3" fill="#2a2420"/></svg>
<div class="r" style="left:1106.80px;top:616.40px;width:12.60px;height:8.40px;background:#2c2c2c;border-radius:1.5px;"></div>
<svg class="ic" style="left:1107.5px;top:617.1999999999999px" width="11" height="7" viewBox="0 0 11 7"><rect x="0.5" y="0.5" width="5.5" height="6" fill="none" stroke="#ddd" stroke-width="0.7"/><path d="M1 6.5 L3 3 L5.5 6.5 Z" fill="#ddd"/><path d="M7.6 3 L8.6 4 L9.6 3" stroke="#ccc" stroke-width="0.6" fill="none"/></svg>
<div class="r" style="left:1121.00px;top:616.40px;width:35.30px;height:8.40px;background:#1a1a1a;border-radius:0px;"></div>
<div class="t" style="left:1123.00px;top:616.70px;font-size:6.5px;color:#dcdcdc;">DSC_121...</div>
<div class="r" style="left:1157.20px;top:616.40px;width:11.40px;height:8.40px;background:#4a4a4a;border-radius:0px;"></div>
<div class="t" style="left:1062.90px;width:200px;text-align:center;top:616.88px;font-size:6.2px;color:#cfcfcf;">3</div>
<div class="r" style="left:1169.20px;top:616.40px;width:40.20px;height:8.40px;background:#383838;border-radius:1.5px;"></div>
<svg class="ic" style="left:1169.2px;top:616.4px" width="40.2" height="8.4" viewBox="0 0 40.2 8.4"><path d="M3 2 L5 1.3 L7 2 L7 4.5 Q5 7.2 5 7.2 Q3 5.5 3 4.5 Z" fill="none" stroke="#ccc" stroke-width="0.6"/><path d="M12.5 2.5 L12.5 7 L17 7 L17 1.5 L14.5 1.5" fill="none" stroke="#ccc" stroke-width="0.6"/><path d="M14 1.5 L16 1.5 L17 2.5 L17 6 L14 6 Z" fill="#ccc"/><path d="M21.5 2 L24 2 L25 3 L29 3 L29 7 L21.5 7 Z" fill="#e0e0e0"/><path d="M33 2 L37 6 M37 2 L33 6" stroke="#bbb" stroke-width="0.7"/></svg>
<div class="r" style="left:1105.60px;top:629.60px;width:103.80px;height:7.60px;background:#282828;border-radius:1.5px;"></div>
<div class="t" style="left:1108.00px;top:629.50px;font-size:6.5px;color:#dcdcdc;">Single Image</div>
<svg class="ic" style="left:1204px;top:632.5px" width="4" height="3" viewBox="0 0 4 3"><path d="M0.4 0.6 L2 2.2 L3.6 0.6" stroke="#bbb" stroke-width="0.7" fill="none"/></svg>
<div class="t" style="left:1105.00px;top:641.60px;font-size:6.5px;color:#dcdcdc;">Color Space</div>
<div class="r" style="left:1159.60px;top:641.60px;width:49.80px;height:7.80px;background:#282828;border-radius:1.5px;"></div>
<div class="t" style="left:1162.60px;top:641.60px;font-size:6.5px;color:#dcdcdc;">sRGB</div>
<svg class="ic" style="left:1204px;top:644.5px" width="4" height="3" viewBox="0 0 4 3"><path d="M0.4 0.6 L2 2.2 L3.6 0.6" stroke="#bbb" stroke-width="0.7" fill="none"/></svg>
<div class="s" style="left:179.95px;top:109.95px;width:4.1px;height:4.1px;background:#c7c729"></div>
<div class="s" style="left:179.95px;top:121.15px;width:4.1px;height:4.1px;background:#a1a1a1"></div>
<div class="s" style="left:179.95px;top:132.25px;width:4.1px;height:4.1px;background:#c7c729"></div>
<div class="s" style="left:179.95px;top:143.45px;width:4.1px;height:4.1px;background:#c7c729"></div>
<div class="s" style="left:179.95px;top:154.55px;width:4.1px;height:4.1px;background:#6a80cc"></div>
<div class="s" style="left:179.95px;top:165.75px;width:4.1px;height:4.1px;background:#c7c729"></div>
<div class="s" style="left:179.95px;top:176.95px;width:4.1px;height:4.1px;background:#a1a1a1"></div>
<div class="s" style="left:386.95px;top:269.95px;width:4.1px;height:4.1px;background:#a1a1a1"></div>
<div class="s" style="left:386.95px;top:281.15px;width:4.1px;height:4.1px;background:#a1a1a1"></div>
<div class="s" style="left:386.95px;top:292.35px;width:4.1px;height:4.1px;background:#a1a1a1"></div>
<div class="s" style="left:386.95px;top:303.45px;width:4.1px;height:4.1px;background:#a1a1a1"></div>
<div class="s" style="left:316.95px;top:315.95px;width:4.1px;height:4.1px;background:#c7c729"></div>
<div class="s" style="left:557.15px;top:165.05px;width:4.1px;height:4.1px;background:#a1a1a1"></div>
<div class="s" style="left:487.15px;top:192.45px;width:4.1px;height:4.1px;background:#a1a1a1"></div>
<div class="s" style="left:487.15px;top:203.55px;width:4.1px;height:4.1px;background:#a1a1a1"></div>
<div class="s" style="left:487.15px;top:214.65px;width:4.1px;height:4.1px;background:#a1a1a1"></div>
<div class="s" style="left:487.15px;top:225.75px;width:4.1px;height:4.1px;background:#a1a1a1"></div>
<div class="s" style="left:487.15px;top:236.95px;width:4.1px;height:4.1px;background:#a1a1a1"></div>
<div class="s" style="left:558.75px;top:272.25px;width:4.1px;height:4.1px;background:#a1a1a1"></div>
<div class="s" style="left:488.75px;top:299.65px;width:4.1px;height:4.1px;background:#a1a1a1"></div>
<div class="s" style="left:488.75px;top:310.75px;width:4.1px;height:4.1px;background:#a1a1a1"></div>
<div class="s" style="left:488.75px;top:321.85px;width:4.1px;height:4.1px;background:#a1a1a1"></div>
<div class="s" style="left:488.75px;top:332.95px;width:4.1px;height:4.1px;background:#a1a1a1"></div>
<div class="s" style="left:488.75px;top:344.15px;width:4.1px;height:4.1px;background:#a1a1a1"></div>
<div class="s" style="left:561.45px;top:374.85px;width:4.1px;height:4.1px;background:#a1a1a1"></div>
<div class="s" style="left:491.45px;top:402.25px;width:4.1px;height:4.1px;background:#a1a1a1"></div>
<div class="s" style="left:491.45px;top:413.35px;width:4.1px;height:4.1px;background:#a1a1a1"></div>
<div class="s" style="left:491.45px;top:424.45px;width:4.1px;height:4.1px;background:#a1a1a1"></div>
<div class="s" style="left:491.45px;top:435.55px;width:4.1px;height:4.1px;background:#a1a1a1"></div>
<div class="s" style="left:491.45px;top:446.75px;width:4.1px;height:4.1px;background:#a1a1a1"></div>
<div class="s" style="left:562.25px;top:491.05px;width:4.1px;height:4.1px;background:#a1a1a1"></div>
<div class="s" style="left:492.25px;top:518.45px;width:4.1px;height:4.1px;background:#a1a1a1"></div>
<div class="s" style="left:492.25px;top:529.55px;width:4.1px;height:4.1px;background:#a1a1a1"></div>
<div class="s" style="left:492.25px;top:540.65px;width:4.1px;height:4.1px;background:#a1a1a1"></div>
<div class="s" style="left:492.25px;top:551.75px;width:4.1px;height:4.1px;background:#a1a1a1"></div>
<div class="s" style="left:492.25px;top:562.95px;width:4.1px;height:4.1px;background:#a1a1a1"></div>
<div class="s" style="left:563.15px;top:600.65px;width:4.1px;height:4.1px;background:#a1a1a1"></div>
<div class="s" style="left:493.15px;top:628.05px;width:4.1px;height:4.1px;background:#a1a1a1"></div>
<div class="s" style="left:493.15px;top:639.15px;width:4.1px;height:4.1px;background:#a1a1a1"></div>
<div class="s" style="left:493.15px;top:650.25px;width:4.1px;height:4.1px;background:#a1a1a1"></div>
<div class="s" style="left:493.15px;top:661.35px;width:4.1px;height:4.1px;background:#a1a1a1"></div>
<div class="s" style="left:493.15px;top:672.55px;width:4.1px;height:4.1px;background:#a1a1a1"></div>
<div class="s" style="left:559.15px;top:715.75px;width:4.1px;height:4.1px;background:#a1a1a1"></div>
<div class="s" style="left:489.15px;top:743.15px;width:4.1px;height:4.1px;background:#a1a1a1"></div>
<div class="s" style="left:489.15px;top:754.25px;width:4.1px;height:4.1px;background:#a1a1a1"></div>
<div class="s" style="left:489.15px;top:765.35px;width:4.1px;height:4.1px;background:#a1a1a1"></div>
<div class="s" style="left:489.15px;top:776.45px;width:4.1px;height:4.1px;background:#a1a1a1"></div>
<div class="s" style="left:489.15px;top:787.65px;width:4.1px;height:4.1px;background:#a1a1a1"></div>
<div class="s" style="left:786.85px;top:261.75px;width:4.1px;height:4.1px;background:#c7c729"></div>
<div class="s" style="left:702.35px;top:274.35px;width:4.1px;height:4.1px;background:#a1a1a1"></div>
<div class="s" style="left:702.35px;top:285.45px;width:4.1px;height:4.1px;background:#a1a1a1"></div>
<div class="s" style="left:702.35px;top:296.45px;width:4.1px;height:4.1px;background:#a1a1a1"></div>
<div class="s" style="left:702.35px;top:307.65px;width:4.1px;height:4.1px;background:#a1a1a1"></div>
<div class="s" style="left:795.65px;top:607.35px;width:4.1px;height:4.1px;background:#c7c729"></div>
<div class="s" style="left:711.15px;top:619.95px;width:4.1px;height:4.1px;background:#a1a1a1"></div>
<div class="s" style="left:711.15px;top:631.05px;width:4.1px;height:4.1px;background:#a1a1a1"></div>
<div class="s" style="left:711.15px;top:642.05px;width:4.1px;height:4.1px;background:#a1a1a1"></div>
<div class="s" style="left:711.15px;top:653.25px;width:4.1px;height:4.1px;background:#a1a1a1"></div>
<div class="s" style="left:953.95px;top:442.75px;width:4.1px;height:4.1px;background:#c7c729"></div>
<div class="s" style="left:883.95px;top:480.95px;width:4.1px;height:4.1px;background:#a1a1a1"></div>
<div class="s" style="left:883.95px;top:492.25px;width:4.1px;height:4.1px;background:#c7c729"></div>
<div class="s" style="left:883.95px;top:503.35px;width:4.1px;height:4.1px;background:#c7c729"></div>
<div class="s" style="left:1298.25px;top:389.95px;width:4.1px;height:4.1px;background:#c7c729"></div>
<div class="s" style="left:1228.25px;top:428.15px;width:4.1px;height:4.1px;background:#a1a1a1"></div>
<div class="s" style="left:1228.25px;top:439.45px;width:4.1px;height:4.1px;background:#c7c729"></div>
<div class="s" style="left:1228.25px;top:450.55px;width:4.1px;height:4.1px;background:#c7c729"></div>
<div class="s" style="left:1391.65px;top:297.75px;width:4.1px;height:4.1px;background:#c7c729"></div>
<div class="s" style="left:1321.25px;top:335.15px;width:4.1px;height:4.1px;background:#a1a1a1"></div>
<div class="s" style="left:1321.25px;top:346.45px;width:4.1px;height:4.1px;background:#c7c729"></div>
<div class="s" style="left:1321.25px;top:357.55px;width:4.1px;height:4.1px;background:#c7c729"></div>
<div class="s" style="left:1321.25px;top:241.35px;width:4.1px;height:4.1px;background:#c7c729"></div>
<div class="s" style="left:1321.25px;top:252.65px;width:4.1px;height:4.1px;background:#a1a1a1"></div>
<div class="s" style="left:1321.25px;top:263.65px;width:4.1px;height:4.1px;background:#a1a1a1"></div>
<div class="s" style="left:380.95px;top:566.25px;width:4.1px;height:4.1px;background:#a1a1a1"></div>
<div class="s" style="left:380.95px;top:577.55px;width:4.1px;height:4.1px;background:#a1a1a1"></div>
<div class="s" style="left:380.95px;top:588.75px;width:4.1px;height:4.1px;background:#a1a1a1"></div>
<div class="s" style="left:380.95px;top:599.75px;width:4.1px;height:4.1px;background:#a1a1a1"></div>
<div class="s" style="left:310.55px;top:612.35px;width:4.1px;height:4.1px;background:#c7c729"></div>
<div class="s" style="left:382.45px;top:659.55px;width:4.1px;height:4.1px;background:#a1a1a1"></div>
<div class="s" style="left:1212.75px;top:470.75px;width:4.1px;height:4.1px;background:#c7c729"></div>
<div class="s" style="left:1212.75px;top:481.95px;width:4.1px;height:4.1px;background:#a1a1a1"></div>
<div class="s" style="left:1212.75px;top:493.15px;width:4.1px;height:4.1px;background:#a1a1a1"></div>
<div class="r" style="left:0.00px;top:0.00px;width:1480.00px;height:21.20px;background:#1b1b1b;border-radius:0px;"></div>
<div class="r" style="left:0.00px;top:21.20px;width:1480.00px;height:2.00px;background:#151515;border-radius:0px;"></div>
<div class="r" style="left:0.00px;top:23.20px;width:1480.00px;height:21.60px;background:#212121;border-radius:0px;"></div>
<svg class="ic" style="left:0px;top:0px" width="26" height="22" viewBox="0 0 26 22"><circle cx="16.9" cy="12.3" r="4.2" fill="none" stroke="#e2e2e2" stroke-width="1.8"/><circle cx="16.9" cy="12.3" r="1.4" fill="#e2e2e2"/><path d="M8.6 13.6 L13.6 10.2 M9.6 8.4 L14.6 8.2 M13.8 5.2 L17.6 7.6" stroke="#e2e2e2" stroke-width="1.7" stroke-linecap="round"/></svg>
<div class="t" style="left:31.00px;top:5.60px;font-size:10px;color:#e2e2e2;">File</div>
<div class="t" style="left:58.40px;top:5.60px;font-size:10px;color:#e2e2e2;">Edit</div>
<div class="t" style="left:89.20px;top:5.60px;font-size:10px;color:#e2e2e2;">Render</div>
<div class="t" style="left:135.00px;top:5.60px;font-size:10px;color:#e2e2e2;">Window</div>
<div class="t" style="left:184.50px;top:5.60px;font-size:10px;color:#e2e2e2;">Help</div>
<div class="r" style="left:717.00px;top:5.00px;width:73.00px;height:16.20px;background:#303030;border-radius:0px;border-radius:3px 3px 0 0;"></div>
<div class="t" style="left:233.60px;top:7.88px;font-size:10.2px;color:#a0a0a0;">Layout</div>
<div class="t" style="left:282.50px;top:7.88px;font-size:10.2px;color:#a0a0a0;">Modeling</div>
<div class="t" style="left:341.60px;top:7.88px;font-size:10.2px;color:#a0a0a0;">Sculpting</div>
<div class="t" style="left:401.00px;top:7.88px;font-size:10.2px;color:#a0a0a0;">UV Editing</div>
<div class="t" style="left:465.30px;top:7.88px;font-size:10.2px;color:#a0a0a0;">Texture Paint</div>
<div class="t" style="left:541.80px;top:7.88px;font-size:10.2px;color:#a0a0a0;">Shading</div>
<div class="t" style="left:596.30px;top:7.88px;font-size:10.2px;color:#a0a0a0;">Animation</div>
<div class="t" style="left:660.30px;top:7.88px;font-size:10.2px;color:#a0a0a0;">Rendering</div>
<div class="t" style="left:799.30px;top:7.88px;font-size:10.2px;color:#a0a0a0;">Geometry Nodes</div>
<div class="t" style="left:894.60px;top:7.88px;font-size:10.2px;color:#a0a0a0;">Scripting</div>
<div class="t" style="left:724.00px;top:7.88px;font-size:10.2px;color:#ececec;">Compositing</div>
<svg class="ic" style="left:948px;top:7.5px" width="10" height="10" viewBox="0 0 10 10"><path d="M5 1 V9 M1 5 H9" stroke="#a0a0a0" stroke-width="1.1"/></svg>
<div class="r" style="left:1136.30px;top:3.40px;width:165.50px;height:16.00px;background:#282828;border-radius:3.5px;"></div>
<div class="r" style="left:1164.00px;top:3.40px;width:104.00px;height:16.00px;background:#151515;border-radius:0px;"></div>
<div class="r" style="left:1268.00px;top:3.40px;width:16.80px;height:16.00px;background:#4a4a4a;border-radius:0px;"></div>
<div class="r" style="left:1284.80px;top:3.40px;width:17.00px;height:16.00px;background:#2c2c2c;border-radius:0px;border-radius:0 3.5px 3.5px 0;"></div>
<div class="t" style="left:1169.50px;top:5.60px;font-size:10px;color:#e0e0e0;">Scene</div>
<svg class="ic" style="left:1139.5px;top:4.5px" width="22" height="14" viewBox="0 0 22 14"><path d="M2 11 L5 3 L7.5 11 Z" fill="#e6e6e6"/><circle cx="7.6" cy="10" r="2.6" fill="#282828" stroke="#e6e6e6" stroke-width="1"/><circle cx="9" cy="3.2" r="1.6" fill="#e6e6e6"/><path d="M14 6 L16 8 L18 6" stroke="#d0d0d0" stroke-width="1" fill="none"/></svg>
<svg class="ic" style="left:1270.4px;top:5.5px" width="12" height="12" viewBox="0 0 12 12"><path d="M2 4 L2 10.5 L8.5 10.5" fill="none" stroke="#d0d0d0" stroke-width="0.9"/><path d="M4 1.5 L8.5 1.5 L10.5 3.5 L10.5 8.5 L4 8.5 Z" fill="none" stroke="#d0d0d0" stroke-width="0.9"/></svg>
<svg class="ic" style="left:1288.3px;top:6.5px" width="10" height="10" viewBox="0 0 10 10"><path d="M1.5 1.5 L8.5 8.5 M8.5 1.5 L1.5 8.5" stroke="#6c6c6c" stroke-width="1"/></svg>
<div class="r" style="left:1307.30px;top:3.40px;width:165.20px;height:16.00px;background:#282828;border-radius:3.5px;"></div>
<div class="r" style="left:1334.70px;top:3.40px;width:103.60px;height:16.00px;background:#151515;border-radius:0px;"></div>
<div class="r" style="left:1438.30px;top:3.40px;width:17.30px;height:16.00px;background:#4a4a4a;border-radius:0px;"></div>
<div class="r" style="left:1455.60px;top:3.40px;width:16.90px;height:16.00px;background:#2c2c2c;border-radius:0px;border-radius:0 3.5px 3.5px 0;"></div>
<div class="t" style="left:1340.20px;top:5.60px;font-size:10px;color:#e0e0e0;">ViewLayer</div>
<svg class="ic" style="left:1310px;top:4.5px" width="22" height="14" viewBox="0 0 22 14"><rect x="1.5" y="4" width="8" height="8" fill="#6a6a6a"/><rect x="4" y="1.5" width="8" height="8" fill="#e6e6e6"/><path d="M5 8.5 L7.5 5 L10 8.5 Z" fill="#282828"/><circle cx="10" cy="3.5" r="0.9" fill="#282828"/><path d="M14.5 6 L16.5 8 L18.5 6" stroke="#d0d0d0" stroke-width="1" fill="none"/></svg>
<svg class="ic" style="left:1440.9499999999998px;top:5.5px" width="12" height="12" viewBox="0 0 12 12"><path d="M2 4 L2 10.5 L8.5 10.5" fill="none" stroke="#d0d0d0" stroke-width="0.9"/><path d="M4 1.5 L8.5 1.5 L10.5 3.5 L10.5 8.5 L4 8.5 Z" fill="none" stroke="#d0d0d0" stroke-width="0.9"/></svg>
<svg class="ic" style="left:1459.05px;top:6.5px" width="10" height="10" viewBox="0 0 10 10"><path d="M1.5 1.5 L8.5 8.5 M8.5 1.5 L1.5 8.5" stroke="#6c6c6c" stroke-width="1"/></svg>
<div class="r" style="left:7.30px;top:26.00px;width:27.10px;height:17.40px;background:#242424;border-radius:3.5px;box-shadow:inset 0 0 0 1px #303030;"></div>
<svg class="ic" style="left:10px;top:28px" width="23" height="14" viewBox="0 0 23 14"><rect x="1.2" y="4.2" width="8.6" height="8.6" rx="0.8" fill="#6e6e6e"/><rect x="2.6" y="2.6" width="9.2" height="9.2" rx="0.8" fill="#8c8c8c"/><rect x="4.8" y="0.7" width="8.8" height="8.8" fill="#e8e8e8"/><path d="M5.6 1.5 L12.4 1.5 L5.6 8.3 Z" fill="#181818"/><path d="M16.3 6.3 L18.9 8.9 L21.5 6.3" stroke="#cfcfcf" stroke-width="1.1" fill="none"/></svg>
<div class="t" style="left:44.80px;top:28.60px;font-size:10px;color:#e0e0e0;">View</div>
<div class="t" style="left:79.40px;top:28.60px;font-size:10px;color:#e0e0e0;">Select</div>
<div class="t" style="left:121.00px;top:28.60px;font-size:10px;color:#e0e0e0;">Add</div>
<div class="t" style="left:151.70px;top:28.60px;font-size:10px;color:#e0e0e0;">Node</div>
<div class="r" style="left:188.00px;top:29.20px;width:11.40px;height:11.30px;background:#4772b3;border-radius:2.5px;"></div>
<svg class="ic" style="left:188px;top:29.2px" width="11.4" height="11.3" viewBox="0 0 10 10"><path d="M2.2 5.1 L4.2 7.1 L8 2.8" stroke="#fff" stroke-width="1.3" fill="none"/></svg>
<div class="t" style="left:202.30px;top:28.60px;font-size:10px;color:#e6e6e6;">Use Nodes</div>
<svg class="ic" style="left:1166px;top:27px" width="17" height="16" viewBox="0 0 17 16"><path d="M2 14 L6.5 9.5" stroke="#bdbdbd" stroke-width="1"/><path d="M9.8 2.2 L14.6 7 L13 7.6 L11 9.6 L10.8 12.2 L4.6 6 L7.2 5.8 L9.2 3.8 Z" fill="none" stroke="#bdbdbd" stroke-width="1"/></svg>
<div class="r" style="left:1190.50px;top:27.00px;width:16.00px;height:16.00px;background:#2a2a2a;border-radius:3px;"></div>
<svg class="ic" style="left:1190.5px;top:27px" width="16" height="16" viewBox="0 0 16 16"><path d="M5.5 5.5 L8 3 L10.5 5.5 M8 3 L8 12.5 L12.5 12.5" fill="none" stroke="#5a5a5a" stroke-width="1.1"/></svg>
<div class="r" style="left:1212.00px;top:26.50px;width:72.00px;height:16.30px;background:#545454;border-radius:3.5px;border-radius:3.5px 0 0 3.5px;"></div>
<div class="t" style="left:1148.00px;width:200px;text-align:center;top:28.60px;font-size:10px;color:#e0e0e0;">Backdrop</div>
<div class="r" style="left:1284.20px;top:26.50px;width:16.30px;height:16.30px;background:#334a72;border-radius:0px;box-shadow:inset 0 0 0 1px #3f5f95;"></div>
<svg class="ic" style="left:1286px;top:28.5px" width="13" height="12" viewBox="0 0 13 12"><rect x="0.7" y="0.7" width="11.6" height="10.6" fill="#a8c0e8"/><path d="M0.7 0.7 L12.3 11.3" stroke="#334a72" stroke-width="1.2"/><path d="M2 11 L5 6 L8 11 Z" fill="#5f7fb5"/><circle cx="9.5" cy="3" r="1" fill="#334a72"/></svg>
<div class="r" style="left:1300.50px;top:26.50px;width:83.00px;height:16.30px;background:#2a2a2a;border-radius:0px;border-radius:0 3.5px 3.5px 0;"></div>
<svg class="ic" style="left:1303px;top:28.5px" width="13" height="12" viewBox="0 0 13 12"><rect x="0.7" y="0.7" width="11.6" height="10.6" fill="none" stroke="#d8d8d8" stroke-width="1.1"/><rect x="2" y="2" width="9" height="8" fill="#707070"/><path d="M3 10 L6 5 L9 10 Z" fill="#e0e0e0"/><circle cx="9" cy="3.5" r="0.9" fill="#e0e0e0"/></svg>
<svg class="ic" style="left:1319.5px;top:28.5px" width="13" height="12" viewBox="0 0 13 12"><rect x="0.7" y="0.7" width="11.6" height="10.6" fill="#e0e0e0"/><path d="M0.7 0.7 L12.3 0.7 L12.3 11.3 Z" fill="#2a2a2a"/><rect x="0.7" y="0.7" width="11.6" height="10.6" fill="none" stroke="#e0e0e0" stroke-width="1"/></svg>
<div class="t" style="left:1242.50px;width:200px;text-align:center;top:27.30px;font-size:12.5px;color:#cfcfcf;">R</div>
<div class="t" style="left:1259.00px;width:200px;text-align:center;top:27.30px;font-size:12.5px;color:#cfcfcf;">G</div>
<div class="t" style="left:1275.60px;width:200px;text-align:center;top:27.30px;font-size:12.5px;color:#cfcfcf;">B</div>
<div class="r" style="left:1389.00px;top:26.50px;width:44.00px;height:16.30px;background:#2a2a2a;border-radius:3.5px;"></div>
<div class="r" style="left:1389.00px;top:26.50px;width:16.50px;height:16.30px;background:#4a4a4a;border-radius:0px;border-radius:3.5px 0 0 3.5px;"></div>
<svg class="ic" style="left:1391px;top:28.5px" width="13" height="12" viewBox="0 0 13 12"><path d="M3 9 L1.8 5.5 Q1.5 1.5 6 1.5 Q10.5 1.5 10 5 L9 7.5 L7 6.8 L8 4.8 Q8 3.5 6 3.5 Q3.8 3.5 4 5.5 L5 8.2 Z" fill="none" stroke="#c8c8c8" stroke-width="0.9"/></svg>
<svg class="ic" style="left:1407px;top:28px" width="25" height="13" viewBox="0 0 25 13"><rect x="1" y="1" width="4" height="4" fill="#e6e6e6"/><path d="M6.5 1 V12 M10.5 1 V12 M1 7.5 H13 M5 11 H13" stroke="#d6d6d6" stroke-width="1"/><path d="M16.5 5.2 L18.5 7.2 L20.5 5.2" stroke="#d0d0d0" stroke-width="1" fill="none"/></svg>
<div class="r" style="left:1438.20px;top:26.50px;width:34.00px;height:16.30px;background:#2a2a2a;border-radius:3.5px;"></div>
<div class="r" style="left:1438.20px;top:26.50px;width:16.60px;height:16.30px;background:#4772b3;border-radius:0px;border-radius:3.5px 0 0 3.5px;"></div>
<svg class="ic" style="left:1439.5px;top:27.5px" width="14" height="14" viewBox="0 0 14 14"><circle cx="8.3" cy="5.8" r="3.8" fill="#f0f0f0"/><circle cx="5.5" cy="8.5" r="3.6" fill="none" stroke="#f0f0f0" stroke-width="1"/></svg>
<svg class="ic" style="left:1458px;top:31.5px" width="10" height="6" viewBox="0 0 10 6"><path d="M2 1.2 L5 4.2 L8 1.2" stroke="#d0d0d0" stroke-width="1" fill="none"/></svg>
<svg class="ic" style="left:0px;top:60.5px" width="6" height="8" viewBox="0 0 6 8"><path d="M1 1 L4 4 L1 7" stroke="#8a8a8a" stroke-width="0.9" fill="none"/></svg>
<svg class="ic" style="left:16px;top:57.5px" width="13" height="14" viewBox="0 0 13 14"><path d="M1 10 L4 2.5 L6.5 10 Z" fill="#d8d8d8"/><circle cx="7.5" cy="9.5" r="2.5" fill="#1d1d1d" stroke="#d8d8d8" stroke-width="1"/><circle cx="10.8" cy="2.3" r="1.5" fill="#d8d8d8"/></svg>
<div class="t" style="left:36.70px;top:58.72px;font-size:9.8px;color:#d0d0d0;">Scene</div>
<svg class="ic" style="left:77.5px;top:60px" width="8" height="10" viewBox="0 0 8 10"><path d="M1.5 1 L5.5 5 L1.5 9" stroke="#c8c8c8" stroke-width="1" fill="none"/></svg>
<svg class="ic" style="left:92px;top:57.5px" width="14" height="14" viewBox="0 0 14 14"><rect x="1" y="1.5" width="8" height="4" rx="1" fill="#d8d8d8"/><rect x="0.5" y="8" width="8" height="4.5" rx="1" fill="#d8d8d8"/><path d="M9 3.5 H12 V10.5 H9" stroke="#d8d8d8" stroke-width="1" fill="none"/></svg>
<div class="t" style="left:112.40px;top:58.42px;font-size:10.3px;color:#d0d0d0;">Compositing Nodetree</div>
<svg class="ic" style="left:1474px;top:60px" width="6" height="9" viewBox="0 0 6 9"><path d="M4.5 1 L1.5 4.5 L4.5 8" stroke="#9a9a9a" stroke-width="0.9" fill="none"/></svg>
<div class="r" style="left:0.00px;top:23.20px;width:1.00px;height:791.00px;background:#151515;border-radius:0px;"></div>
<div class="r" style="left:1478.80px;top:23.20px;width:1.20px;height:791.00px;background:#151515;border-radius:0px;"></div>
<div class="r" style="left:0.00px;top:814.30px;width:1480.00px;height:1.80px;background:#141414;border-radius:0px;"></div>
<div class="r" style="left:0.00px;top:816.00px;width:1480.00px;height:17.00px;background:#1f1f1f;border-radius:0px;"></div>
<svg class="ic" style="left:10px;top:817.8px" width="11" height="14" viewBox="0 0 11 14"><rect x="0.9" y="0.9" width="9" height="12.4" rx="3" fill="none" stroke="#b8b8b8" stroke-width="0.9"/><path d="M1.4 6 V3.5 Q1.4 1.4 4 1.4 H5.4 V6 Z" fill="#b0b0b0"/></svg>
<div class="t" style="left:29.80px;top:819.40px;font-size:10px;color:#b4b4b4;">Select</div>
<svg class="ic" style="left:67px;top:817.8px" width="11" height="14" viewBox="0 0 11 14"><rect x="0.9" y="0.9" width="9" height="12.4" rx="3" fill="none" stroke="#b8b8b8" stroke-width="0.9"/><path d="M1.4 6 V3.5 Q1.4 1.4 4 1.4 H5.4 V6 Z" fill="#b0b0b0"/></svg>
<svg class="ic" style="left:77.5px;top:817.5px" width="5" height="8" viewBox="0 0 5 8"><path d="M1 1 L3.5 3.5 L1 6 Z" fill="#8a8a8a"/></svg>
<div class="t" style="left:88.10px;top:819.40px;font-size:10px;color:#b4b4b4;">Box Select</div>
<svg class="ic" style="left:199.5px;top:817.8px" width="11" height="14" viewBox="0 0 11 14"><rect x="0.9" y="0.9" width="9" height="12.4" rx="3" fill="none" stroke="#b8b8b8" stroke-width="0.9"/><rect x="4.4" y="2.6" width="2" height="4" rx="1" fill="#b0b0b0"/></svg>
<div class="t" style="left:219.20px;top:819.40px;font-size:10px;color:#b4b4b4;">Pan View</div>
<svg class="ic" style="left:389px;top:817.8px" width="11" height="14" viewBox="0 0 11 14"><rect x="0.9" y="0.9" width="9" height="12.4" rx="3" fill="none" stroke="#b8b8b8" stroke-width="0.9"/><path d="M9.4 6 V3.5 Q9.4 1.4 7 1.4 H5.4 V6 Z" fill="#b0b0b0"/></svg>
<div class="t" style="left:408.50px;top:819.40px;font-size:10px;color:#b4b4b4;">Node Context Menu</div>
<div class="t" style="right:8.20px;top:819.08px;font-size:10.2px;color:#8c8c8c;">3.0.0</div></body></html>
